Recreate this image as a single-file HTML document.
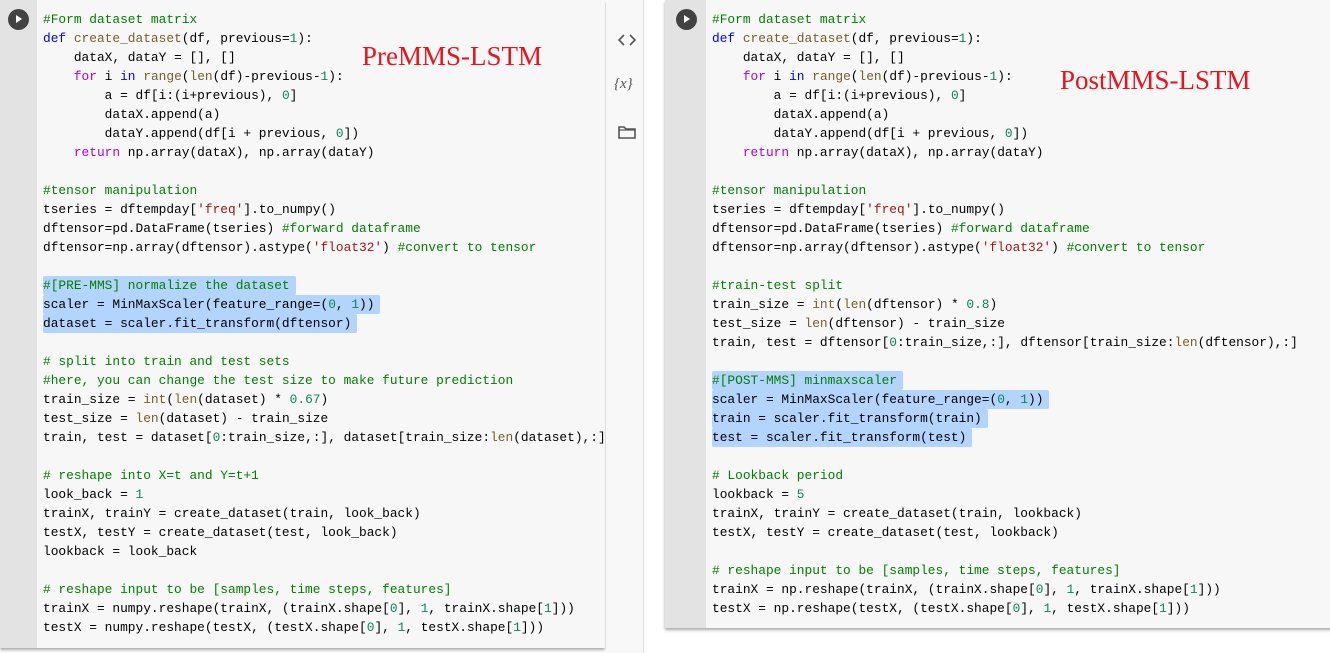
<!DOCTYPE html>
<html><head><meta charset="utf-8"><style>
body{margin:0;width:1330px;height:653px;background:#fff;position:relative;overflow:hidden;font-family:"Liberation Mono",monospace}
.cell{position:absolute;background:#f7f7f7;box-shadow:0 2px 3px rgba(0,0,0,.35)}
.gut{position:absolute;left:0;top:0;bottom:0;width:37px;background:#e3e3e3}
.play{position:absolute;width:21px;height:21px;border-radius:50%;background:#424242}
.play:after{content:"";position:absolute;left:8px;top:6px;border-left:6px solid #fff;border-top:4.5px solid transparent;border-bottom:4.5px solid transparent}
pre{position:absolute;margin:0;font-family:"Liberation Mono",monospace;font-size:12.85px;line-height:19px;color:#000}
.c{color:#008000}.k{color:#0000ff}.p{color:#af00db}.f{color:#795e26}.n{color:#098658}.s{color:#a31515}
.h{background:#b3d4fc;border-radius:2px;padding-right:6px;display:inline-block;height:19px;vertical-align:top}
.lbl{position:absolute;font-family:"Liberation Serif",serif;color:#e8141c;font-size:27px}
</style></head><body>
<div class="cell" style="left:0;top:0;width:605px;height:648px;">
<div class="gut"></div><div class="play" style="left:8px;top:9px"></div>
<pre style="left:43px;top:10px"><span class="c">#Form dataset matrix</span>
<span class="k">def</span> <span class="f">create_dataset</span>(df, previous=<span class="n">1</span>):
    dataX, dataY = [], []
    <span class="p">for</span> i <span class="k">in</span> <span class="f">range</span>(<span class="f">len</span>(df)-previous-<span class="n">1</span>):
        a = df[i:(i+previous), <span class="n">0</span>]
        dataX.append(a)
        dataY.append(df[i + previous, <span class="n">0</span>])
    <span class="p">return</span> np.array(dataX), np.array(dataY)

<span class="c">#tensor manipulation</span>
tseries = dftempday[<span class="s">'freq'</span>].to_numpy()
dftensor=pd.DataFrame(tseries) <span class="c">#forward dataframe</span>
dftensor=np.array(dftensor).astype(<span class="s">'float32'</span>) <span class="c">#convert to tensor</span>

<span class="h"><span class="c">#[PRE-MMS] normalize the dataset</span></span>
<span class="h">scaler = MinMaxScaler(feature_range=(<span class="n">0</span>, <span class="n">1</span>))</span>
<span class="h">dataset = scaler.fit_transform(dftensor)</span>

<span class="c"># split into train and test sets</span>
<span class="c">#here, you can change the test size to make future prediction</span>
train_size = <span class="f">int</span>(<span class="f">len</span>(dataset) * <span class="n">0.67</span>)
test_size = <span class="f">len</span>(dataset) - train_size
train, test = dataset[<span class="n">0</span>:train_size,:], dataset[train_size:<span class="f">len</span>(dataset),:]

<span class="c"># reshape into X=t and Y=t+1</span>
look_back = <span class="n">1</span>
trainX, trainY = create_dataset(train, look_back)
testX, testY = create_dataset(test, look_back)
lookback = look_back

<span class="c"># reshape input to be [samples, time steps, features]</span>
trainX = numpy.reshape(trainX, (trainX.shape[<span class="n">0</span>], <span class="n">1</span>, trainX.shape[<span class="n">1</span>]))
testX = numpy.reshape(testX, (testX.shape[<span class="n">0</span>], <span class="n">1</span>, testX.shape[<span class="n">1</span>]))</pre>
<div class="lbl" style="left:362px;top:41px">PreMMS-LSTM</div>
</div>
<div style="position:absolute;left:606px;top:0;width:37px;height:653px;background:#f8f8f8;border-right:1px solid #ddd"></div>
<svg style="position:absolute;left:618px;top:33px" width="18" height="14"><path d="M6 2L1 7l5 5M12 2l5 5-5 5" fill="none" stroke="#555" stroke-width="1.6"/></svg>
<div style="position:absolute;left:614px;top:76px;font-size:15px;color:#555;font-family:'Liberation Serif',serif;font-style:italic">{x}</div>
<svg style="position:absolute;left:618px;top:125px" width="18" height="14"><path d="M1 2h5l2 2h9v9H1z" fill="none" stroke="#555" stroke-width="1.6"/><path d="M1 5h16" stroke="#555" stroke-width="1.2"/></svg>
<div class="cell" style="left:665px;top:0;width:670px;height:628px;">
<div class="gut" style="width:41px"></div><div class="play" style="left:11px;top:9px"></div>
<pre style="left:47px;top:10px"><span class="c">#Form dataset matrix</span>
<span class="k">def</span> <span class="f">create_dataset</span>(df, previous=<span class="n">1</span>):
    dataX, dataY = [], []
    <span class="p">for</span> i <span class="k">in</span> <span class="f">range</span>(<span class="f">len</span>(df)-previous-<span class="n">1</span>):
        a = df[i:(i+previous), <span class="n">0</span>]
        dataX.append(a)
        dataY.append(df[i + previous, <span class="n">0</span>])
    <span class="p">return</span> np.array(dataX), np.array(dataY)

<span class="c">#tensor manipulation</span>
tseries = dftempday[<span class="s">'freq'</span>].to_numpy()
dftensor=pd.DataFrame(tseries) <span class="c">#forward dataframe</span>
dftensor=np.array(dftensor).astype(<span class="s">'float32'</span>) <span class="c">#convert to tensor</span>

<span class="c">#train-test split</span>
train_size = <span class="f">int</span>(<span class="f">len</span>(dftensor) * <span class="n">0.8</span>)
test_size = <span class="f">len</span>(dftensor) - train_size
train, test = dftensor[<span class="n">0</span>:train_size,:], dftensor[train_size:<span class="f">len</span>(dftensor),:]

<span class="h"><span class="c">#[POST-MMS] minmaxscaler</span></span>
<span class="h">scaler = MinMaxScaler(feature_range=(<span class="n">0</span>, <span class="n">1</span>))</span>
<span class="h">train = scaler.fit_transform(train)</span>
<span class="h">test = scaler.fit_transform(test)</span>

<span class="c"># Lookback period</span>
lookback = <span class="n">5</span>
trainX, trainY = create_dataset(train, lookback)
testX, testY = create_dataset(test, lookback)

<span class="c"># reshape input to be [samples, time steps, features]</span>
trainX = np.reshape(trainX, (trainX.shape[<span class="n">0</span>], <span class="n">1</span>, trainX.shape[<span class="n">1</span>]))
testX = np.reshape(testX, (testX.shape[<span class="n">0</span>], <span class="n">1</span>, testX.shape[<span class="n">1</span>]))</pre>
<div class="lbl" style="left:395px;top:65px">PostMMS-LSTM</div>
</div>
</body></html>
